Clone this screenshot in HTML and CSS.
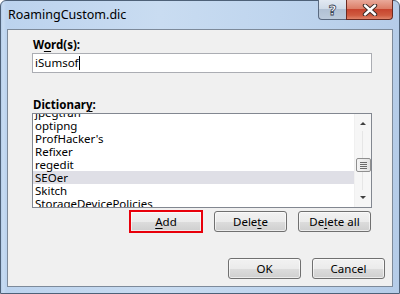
FILE: index.html
```html
<!DOCTYPE html>
<html>
<head>
    <meta charset="utf-8">
    <title>RoamingCustom.dic</title>
    <link rel="stylesheet" href="styles.css">
</head>
<body>
    <div class="window">
        <div class="titlebar">
            <span class="title">RoamingCustom.dic</span>
            <div class="caption-btns">
                <span class="cap help">?</span>
                <span class="cap close">
                    <svg width="16" height="12" viewBox="0 0 16 12">
                        <path d="M3 1.5 L13 10.5 M13 1.5 L3 10.5" stroke="#3b2a26" stroke-width="4.4" stroke-linecap="round"/>
                        <path d="M3 1.5 L13 10.5 M13 1.5 L3 10.5" stroke="#fff" stroke-width="2.4" stroke-linecap="round"/>
                    </svg>
                </span>
            </div>
        </div>
        <div class="client">
            <div class="label">W<u>o</u>rd(s):</div>
            <div class="input">iSumsof<span class="caret"></span></div>

            <div class="label dict">Dictionar<u>y</u>:</div>
            <div class="listbox">
                <ul class="items">
                    <li>jpegtran</li>
                    <li>optipng</li>
                    <li>ProfHacker's</li>
                    <li>Refixer</li>
                    <li>regedit</li>
                    <li class="sel">SEOer</li>
                    <li>Skitch</li>
                    <li>StorageDevicePolicies</li>
                </ul>
                <div class="scrollbar">
                    <span class="arrow up"></span>
                    <span class="track">
                        <span class="thumb"><i></i><i></i><i></i><i></i></span>
                    </span>
                    <span class="arrow down"></span>
                </div>
            </div>

            <div class="row edit-row">
                <span class="btn hot"><u>A</u>dd</span>
                <span class="btn">Dele<u>t</u>e</span>
                <span class="btn">De<u>l</u>ete all</span>
            </div>

            <div class="row ok-row">
                <span class="btn">OK</span>
                <span class="btn">Cancel</span>
            </div>
        </div>
    </div>
</body>
</html>
```

FILE: styles.css
```css
*{margin:0;padding:0;box-sizing:border-box;list-style:none;}
body{width:400px;height:294px;overflow:hidden;font-family:"Noto Sans","Open Sans",sans-serif;font-size:11.5px;color:#000;background:#fff;}

.window{
    width:400px;
    height:294px;
    display:flex;
    flex-direction:column;
    border:1px solid #4e6178;
    border-radius:6px 6px 0 0;
    background:linear-gradient(to right,#b5cde9 0,#c8dcf2 2px,#bcd3ee 5px,#c9dcf1 40%,#bfd5ee 70%,#b5cce8 100%);
}
.titlebar{
    height:28px;
    display:flex;
    align-items:flex-start;
    justify-content:space-between;
    padding:0 6px 0 7px;
}
.title{font-size:12.5px;line-height:28px;color:#000;}
.caption-btns{display:flex;margin-top:-1px;}
.cap{
    height:20px;
    display:flex;
    align-items:center;
    justify-content:center;
    border:1px solid #5a6a80;
    border-top:none;
}
.help{
    width:28px;
    border-radius:0 0 0 4px;
    border-right:none;
    background:linear-gradient(#e2e9f2 0,#d0dbe8 45%,#b1c1d4 50%,#bccbdc 100%);
    color:#fff;
    font-family:"DejaVu Sans",sans-serif;
    font-weight:bold;
    font-size:14px;
    -webkit-text-stroke:0.8px #3a4556;
}
.close{
    width:47px;
    border-radius:0 0 4px 0;
    border-color:#6b2a20;
    background:linear-gradient(#e9a99a 0,#dc7e68 45%,#c7452f 50%,#cf5a3f 80%,#e0846a 100%);
}

.client{
    flex:1;
    margin:0 6px 6px 6px;
    background:#f0f0f0;
    border:1px solid #7d8a9a;
    padding:7px 20px 0 24px;
    display:flex;
    flex-direction:column;
}
.label{font-weight:bold;height:15px;line-height:15px;padding-left:1px;}
.label u,.btn u{text-decoration-thickness:1px;text-underline-offset:2px;}
.input{
    margin-top:1px;
    height:20px;
    background:#fff;
    border:1px solid #abadb3;
    padding-left:2px;
    line-height:18px;
    display:flex;
    align-items:center;
}
.caret{display:inline-block;width:1px;height:14px;background:#000;}
.dict{margin-top:24px;}

.listbox{
    margin-top:1px;
    height:95px;
    background:#fff;
    border:1px solid #828790;
    display:flex;
    overflow:hidden;
}
.items{flex:1;margin-top:-8px;}
.items li{height:13px;line-height:13px;padding-left:2px;white-space:nowrap;}
.items li.sel{background:#dfdfe6;}
.scrollbar{
    width:17px;
    display:flex;
    flex-direction:column;
    background:#f6f6f6;
    border-left:1px solid #f0f0f0;
}
.arrow{height:17px;display:flex;align-items:center;justify-content:center;}
.arrow::before{content:"";border-left:3px solid transparent;border-right:3px solid transparent;}
.up::before{border-bottom:3px solid #404040;margin-top:2px;}
.down::before{border-top:3px solid #404040;margin-top:-2px;}
.track{
    flex:1;
    display:flex;
    flex-direction:column;
    align-items:center;
    padding-top:27px;
    background:linear-gradient(to right,transparent 7px,#e6e6e6 7px,#e6e6e6 8px,transparent 8px);
}
.thumb{
    width:15px;
    height:14px;
    border:1px solid #8f8f8f;
    border-radius:2px;
    background:linear-gradient(to right,#f4f4f4,#e2e2e2);
    display:flex;
    flex-direction:column;
    justify-content:center;
    gap:1px;
    padding:0 3px;
}
.thumb i{display:block;height:1px;background:#6a6a6a;}

.row{display:flex;gap:11px;justify-content:flex-end;}
.edit-row{margin-top:2px;align-items:center;height:23px;padding-right:1px;}
.ok-row{margin-top:25px;margin-right:-13px;}
.btn{
    width:73px;
    height:21px;
    display:flex;
    align-items:center;
    justify-content:center;
    border:1px solid #707070;
    border-radius:3px;
    background:linear-gradient(#f2f2f2 0,#ebebeb 50%,#dddddd 50%,#cfcfcf 100%);
    font-size:11.5px;
    color:#000;
    box-shadow:inset 0 0 0 1px rgba(255,255,255,0.6);
}
.btn.hot{
    width:74px;
    height:23px;
    border:2px solid #e8000b;
    border-radius:0;
}
```
